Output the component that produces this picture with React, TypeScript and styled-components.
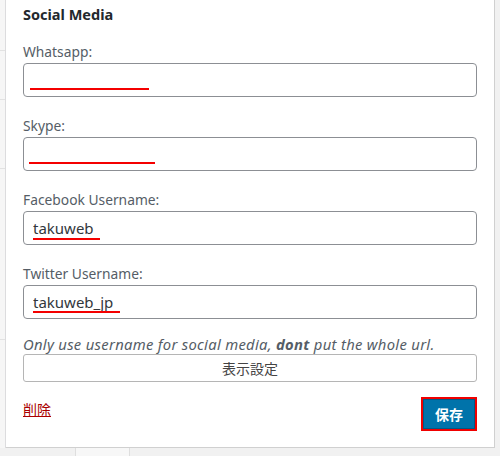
import React from "react";
import styled, { createGlobalStyle } from "styled-components";

const Global = createGlobalStyle`
  html, body { margin: 0; padding: 0; background: #f1f1f1; }
  body { font-family: "Noto Sans", "Noto Sans CJK JP", sans-serif; }
`;

const Page = styled.div`
  width: 500px;
  height: 456px;
  overflow: hidden;
  position: relative;
  background: #f1f1f1;
  display: grid;
  grid-template-columns: 6px 489px 5px;
  grid-template-rows: 448px 8px;
`;

const SideStrip = styled.div`
  background: #f6f6f6;
  border-right: 1px solid #dcdcde;
  display: flex;
  flex-direction: column;
`;

const StripCell = styled.div<{ $h: number }>`
  height: ${(p) => p.$h}px;
  border-bottom: 1px solid #e2e2e2;
`;

const Panel = styled.div`
  background: #fff;
  border-right: 1px solid #d0d0d0;
  border-bottom: 1px solid #d0d0d0;
  padding: 4px 17px 0 17px;
  display: flex;
  flex-direction: column;
  color: #50575e;
`;

const Heading = styled.h3`
  margin: 0 0 19px;
  font-size: 14.5px;
  font-weight: 700;
  line-height: 20px;
  color: #23282d;
`;

const Field = styled.div`
  display: flex;
  flex-direction: column;
  gap: 2px;
  margin-bottom: 20px;
`;

const Label = styled.label`
  font-size: 13.8px;
  line-height: 18px;
  color: #555d66;
`;

const InputWrap = styled.div`
  position: relative;
`;

const Input = styled.input`
  box-sizing: border-box;
  width: 100%;
  height: 34px;
  border: 1px solid #8c8f94;
  border-radius: 4px;
  padding: 0 9px;
  font-family: "Noto Sans", "Noto Sans CJK JP", sans-serif;
  font-size: 15px;
  color: #32373c;
  background: #fff;
  outline: none;
`;

const Mark = styled.div<{ $left: number; $top: number; $w: number }>`
  position: absolute;
  left: ${(p) => p.$left}px;
  top: ${(p) => p.$top}px;
  width: ${(p) => p.$w}px;
  height: 2px;
  background: #f40000;
`;

const Help = styled.p`
  margin: -4px 0 0;
  font-size: 14.8px;
  letter-spacing: 0.3px;
  line-height: 18px;
  font-style: italic;
  color: #555d66;
  white-space: nowrap;
`;

const WideButton = styled.button`
  box-sizing: border-box;
  margin-top: 1px;
  width: 100%;
  height: 28px;
  border: 1px solid #b5b5b5;
  border-radius: 3px;
  background: #fff;
  color: #444;
  font-family: "Noto Sans CJK JP", sans-serif;
  font-size: 14px;
  padding: 0;
`;

const Actions = styled.div`
  display: flex;
  justify-content: space-between;
  align-items: flex-start;
  margin-top: 15px;
`;

const DeleteLink = styled.a`
  margin-top: 3px;
  color: #a00;
  font-family: "Noto Sans CJK JP", sans-serif;
  font-size: 14px;
  line-height: 18px;
  text-decoration: underline;
  cursor: pointer;
`;

const SaveOutline = styled.div`
  border: 2px solid #f00000;
  display: flex;
`;

const SaveButton = styled.button`
  width: 52px;
  height: 30px;
  border: 1px solid #005a87;
  background: #0073aa;
  color: #fff;
  font-family: "Noto Sans CJK JP", sans-serif;
  font-weight: 700;
  font-size: 14px;
  padding: 0;
`;

const Corner = styled.div`
  background: #f1f1f1;
`;

const BottomStrip = styled.div`
  grid-column: 1 / span 3;
  display: flex;
  background: #f1f1f1;
`;

const Tab = styled.div<{ $w: number; $bg: string }>`
  width: ${(p) => p.$w}px;
  background: ${(p) => p.$bg};
  border-right: 1px solid #dedede;
`;

const fields = [
  { label: "Whatsapp:", value: "", mark: { left: 7, top: 25, w: 119 } },
  { label: "Skype:", value: "", mark: { left: 6, top: 25, w: 126 } },
  { label: "Facebook Username:", value: "takuweb", mark: { left: 10, top: 27, w: 67 } },
  { label: "Twitter Username:", value: "takuweb_jp", mark: { left: 10, top: 26, w: 87 } },
];

export default function App() {
  return (
    <>
      <Global />
      <Page>
        <SideStrip>
          <StripCell $h={50} />
          <StripCell $h={48} />
          <StripCell $h={68} />
          <StripCell $h={170} />
        </SideStrip>
        <Panel>
          <Heading>Social Media</Heading>
          {fields.map((f) => (
            <Field key={f.label}>
              <Label>{f.label}</Label>
              <InputWrap>
                <Input defaultValue={f.value} readOnly />
                <Mark $left={f.mark.left} $top={f.mark.top} $w={f.mark.w} />
              </InputWrap>
            </Field>
          ))}
          <Help>
            Only use username for social media, <b>dont</b> put the whole url.
          </Help>
          <WideButton>表示設定</WideButton>
          <Actions>
            <DeleteLink>削除</DeleteLink>
            <SaveOutline>
              <SaveButton>保存</SaveButton>
            </SaveOutline>
          </Actions>
        </Panel>
        <Corner />
        <BottomStrip>
          <Tab $w={75} $bg="#f1f1f1" />
          <Tab $w={53} $bg="#f7f7f7" />
        </BottomStrip>
      </Page>
    </>
  );
}
